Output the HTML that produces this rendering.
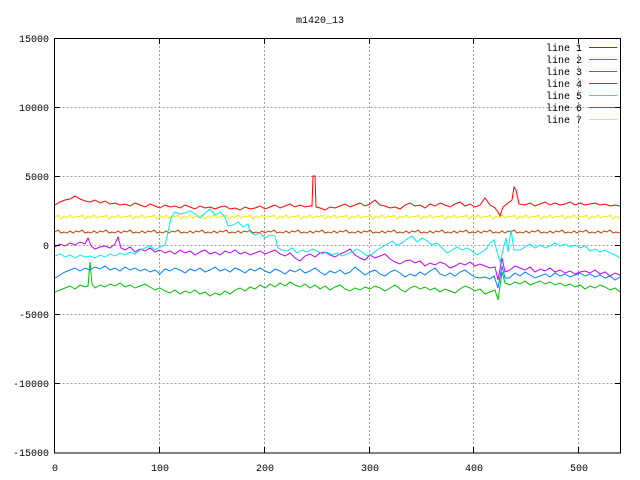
<!DOCTYPE html>
<html><head><meta charset="utf-8"><style>
html,body{margin:0;padding:0;background:#fff;width:640px;height:480px;overflow:hidden}
svg text{font-family:"Liberation Mono","DejaVu Sans Mono",monospace;font-size:10px;fill:#000}
</style></head><body>
<svg width="640" height="480" xmlns="http://www.w3.org/2000/svg">
<defs><clipPath id="c"><rect x="55" y="38" width="566" height="415"/></clipPath></defs>
<text x="320" y="23" text-anchor="middle">m1420_13</text>
<g stroke="#a0a0a0" stroke-dasharray="2,2" stroke-width="1" shape-rendering="crispEdges">
<line x1="54.5" y1="107.5" x2="621" y2="107.5"/>
<line x1="54.5" y1="176.5" x2="621" y2="176.5"/>
<line x1="54.5" y1="245.5" x2="621" y2="245.5"/>
<line x1="54.5" y1="314.5" x2="621" y2="314.5"/>
<line x1="54.5" y1="383.5" x2="621" y2="383.5"/>
<line x1="159.5" y1="38" x2="159.5" y2="453"/>
<line x1="264.5" y1="38" x2="264.5" y2="453"/>
<line x1="369.5" y1="38" x2="369.5" y2="453"/>
<line x1="473.5" y1="38" x2="473.5" y2="453"/>
<line x1="578.5" y1="38" x2="578.5" y2="453"/>
</g>
<g text-anchor="end">
<text x="49" y="42">15000</text><text x="49" y="111">10000</text><text x="49" y="180">5000</text>
<text x="49" y="249">0</text><text x="49" y="318">-5000</text><text x="49" y="387">-10000</text><text x="49" y="456">-15000</text>
</g>
<g text-anchor="middle">
<text x="55" y="471">0</text><text x="160" y="471">100</text><text x="265" y="471">200</text>
<text x="370" y="471">300</text><text x="474" y="471">400</text><text x="579" y="471">500</text>
</g>
<g fill="none" stroke-width="1" clip-path="url(#c)">
<path stroke="#eeee00" d="M55,217 l3,-2 l3,4 l3,-3 l3,2 l3,-3 l3,3 l3,-2 l3,1 l3,-2 l3,4 l3,-3 l3,2 l3,-3 l3,3 l3,-2 l3,1 l3,-2 l3,4 l3,-3 l3,2 l3,-3 l3,3 l3,-2 l3,1 l3,-2 l3,4 l3,-3 l3,2 l3,-3 l3,3 l3,-2 l3,1 l3,-2 l3,4 l3,-3 l3,2 l3,-3 l3,3 l3,-2 l3,1 l3,-2 l3,4 l3,-3 l3,2 l3,-3 l3,3 l3,-2 l3,1 l3,-2 l3,4 l3,-3 l3,2 l3,-3 l3,3 l3,-2 l3,1 l3,-2 l3,4 l3,-3 l3,2 l3,-3 l3,3 l3,-2 l3,1 l3,-2 l3,4 l3,-3 l3,2 l3,-3 l3,3 l3,-2 l3,1 l3,-2 l3,4 l3,-3 l3,2 l3,-3 l3,3 l3,-2 l3,1 l3,-2 l3,4 l3,-3 l3,2 l3,-3 l3,3 l3,-2 l3,1 l3,-2 l3,4 l3,-3 l3,2 l3,-3 l3,3 l3,-2 l3,1 l3,-2 l3,4 l3,-3 l3,2 l3,-3 l3,3 l3,-2 l3,1 l3,-2 l3,4 l3,-3 l3,2 l3,-3 l3,3 l3,-2 l3,1 l3,-2 l3,4 l3,-3 l3,2 l3,-3 l3,3 l3,-2 l3,1 l3,-2 l3,4 l3,-3 l3,2 l3,-3 l3,3 l3,-2 l3,1 l3,-2 l3,4 l3,-3 l3,2 l3,-3 l3,3 l3,-2 l3,1 l3,-2 l3,4 l3,-3 l3,2 l3,-3 l3,3 l3,-2 l3,1 l3,-2 l3,4 l3,-3 l3,2 l3,-3 l3,3 l3,-2 l3,1 l3,-2 l3,4 l3,-3 l3,2 l3,-3 l3,3 l3,-2 l3,1 l3,-2 l3,4 l3,-3 l3,2 l3,-3 l3,3 l3,-2 l3,1 l3,-2 l3,4 l3,-3 l3,2 l3,-3 l3,3 l3,-2 l3,1 l3,-2 l3,4 l3,-3 l3,2 l3,-3 l3,3 l3,-2 l3,1 l3,-2 l3,4 l3,-3 l3,2 l3,-3 l3,3 l3,-2 l3,1 l3,-2 l3,4 l3,-3 l3,2 l3,-3 l3,3 l3,-2 l3,1"/>
<path stroke="#c04000" d="M55,232 l3,-2 l3,3 l3,-1 l3,1 l3,-2 l3,2 l3,-2 l3,1 l3,-2 l3,3 l3,-1 l3,1 l3,-2 l3,2 l3,-2 l3,1 l3,-2 l3,3 l3,-1 l3,1 l3,-2 l3,2 l3,-2 l3,1 l3,-2 l3,3 l3,-1 l3,1 l3,-2 l3,2 l3,-2 l3,1 l3,-2 l3,3 l3,-1 l3,1 l3,-2 l3,2 l3,-2 l3,1 l3,-2 l3,3 l3,-1 l3,1 l3,-2 l3,2 l3,-2 l3,1 l3,-2 l3,3 l3,-1 l3,1 l3,-2 l3,2 l3,-2 l3,1 l3,-2 l3,3 l3,-1 l3,1 l3,-2 l3,2 l3,-2 l3,1 l3,-2 l3,3 l3,-1 l3,1 l3,-2 l3,2 l3,-2 l3,1 l3,-2 l3,3 l3,-1 l3,1 l3,-2 l3,2 l3,-2 l3,1 l3,-2 l3,3 l3,-1 l3,1 l3,-2 l3,2 l3,-2 l3,1 l3,-2 l3,3 l3,-1 l3,1 l3,-2 l3,2 l3,-2 l3,1 l3,-2 l3,3 l3,-1 l3,1 l3,-2 l3,2 l3,-2 l3,1 l3,-2 l3,3 l3,-1 l3,1 l3,-2 l3,2 l3,-2 l3,1 l3,-2 l3,3 l3,-1 l3,1 l3,-2 l3,2 l3,-2 l3,1 l3,-2 l3,3 l3,-1 l3,1 l3,-2 l3,2 l3,-2 l3,1 l3,-2 l3,3 l3,-1 l3,1 l3,-2 l3,2 l3,-2 l3,1 l3,-2 l3,3 l3,-1 l3,1 l3,-2 l3,2 l3,-2 l3,1 l3,-2 l3,3 l3,-1 l3,1 l3,-2 l3,2 l3,-2 l3,1 l3,-2 l3,3 l3,-1 l3,1 l3,-2 l3,2 l3,-2 l3,1 l3,-2 l3,3 l3,-1 l3,1 l3,-2 l3,2 l3,-2 l3,1 l3,-2 l3,3 l3,-1 l3,1 l3,-2 l3,2 l3,-2 l3,1 l3,-2 l3,3 l3,-1 l3,1 l3,-2 l3,2 l3,-2 l3,1 l3,-2 l3,3 l3,-1 l3,1 l3,-2 l3,2 l3,-2 l3,1 l3,-2 l3,3 l3,-1 l3,1 l3,-2 l3,2 l3,-2 l3,1 l3,-2 l3,3 l3,-1 l3,1 l3,-2 l3,2 l3,-2 l3,1 l3,-2 l3,3 l3,-1 l3,1 l3,-2 l3,2 l3,-2 l3,1"/>
<polyline stroke="#ff0000" points="55,205 60,202 65,200 70,199 75,196 80,199 85,201 90,202 95,200 100,203 105,201 110,204 115,203 120,205 125,204 130,206 135,203 140,205 145,207 150,204 155,206 160,208 165,205 170,207 175,206 180,208 185,205 190,207 195,209 200,206 205,208 210,207 215,209 220,207 225,206 230,209 235,208 240,210 245,207 250,209 255,208 260,206 265,209 270,207 275,205 280,208 285,206 290,204 295,207 300,205 305,207 310,206 312,206 313,176 315,176 316,207 320,208 325,210 330,207 335,208 340,206 345,204 350,207 355,205 360,203 365,206 370,204 375,200 380,205 385,206 390,208 395,207 400,209 405,205 410,203 415,206 420,205 425,208 430,204 435,206 440,203 445,205 450,207 455,204 460,202 465,206 470,204 475,207 480,205 485,198 490,205 495,208 498,212 500,216 503,207 508,203 512,200 514,187 516,190 519,204 525,205 530,203 535,206 540,204 545,202 550,205 555,203 560,205 565,204 570,202 575,205 580,203 585,205 590,204 595,203 600,205 605,204 610,206 615,205 620,206"/>
<polyline stroke="#00c000" points="55,292 60,290 65,288 70,286 75,289 80,285 85,287 88,286 90,262 92,284 95,288 100,285 105,287 110,284 115,286 120,283 125,287 130,285 135,288 140,286 145,284 150,287 155,290 160,288 165,291 170,293 175,290 180,294 185,291 190,293 195,290 200,294 205,292 210,296 215,293 220,295 225,291 230,294 235,290 240,288 245,291 250,287 255,289 260,285 265,288 270,284 275,287 280,283 285,286 290,282 295,285 300,287 305,284 310,288 315,285 320,289 325,286 330,290 335,287 340,285 345,289 350,291 355,288 360,290 365,287 370,289 375,286 380,288 385,291 390,288 395,285 400,289 405,292 410,288 415,286 420,289 425,287 430,290 435,288 440,292 445,289 450,291 455,293 460,289 465,286 470,288 475,291 480,289 485,294 490,292 495,290 498,300 502,272 505,283 510,285 515,282 520,284 525,281 530,285 535,283 540,281 545,284 550,282 555,285 560,283 565,286 570,284 575,287 580,285 585,289 590,286 595,288 600,285 605,287 610,290 615,288 620,292"/>
<polyline stroke="#0080ff" points="55,278 60,275 65,272 70,270 75,268 80,271 85,268 90,270 95,267 100,269 105,266 110,270 115,268 120,271 125,267 130,270 135,268 140,271 145,269 150,272 155,270 160,274 165,269 170,271 175,268 180,270 185,273 190,269 195,271 200,268 205,272 210,270 215,267 220,271 225,269 230,272 235,268 240,270 245,273 250,269 255,271 260,268 265,271 270,273 275,269 280,271 285,274 290,270 295,272 300,269 305,273 310,271 315,268 320,272 325,275 330,271 335,273 340,270 345,274 350,272 355,267 360,271 365,275 370,272 375,270 380,274 385,276 390,272 395,270 400,273 405,277 410,274 415,276 420,272 425,275 430,271 435,268 440,274 445,276 450,273 455,276 460,272 465,270 470,274 475,277 480,278 485,277 490,279 494,276 498,288 502,266 505,278 509,278 515,273 520,276 525,272 530,275 535,278 540,276 545,274 550,277 555,273 560,276 565,274 570,277 575,275 580,273 585,276 590,274 595,277 600,275 605,278 610,276 615,280 620,277"/>
<polyline stroke="#c000ff" points="55,247 60,244 65,246 70,243 75,245 80,242 85,244 88,238 91,246 95,249 100,247 105,246 110,248 115,244 118,237 121,248 125,250 130,247 135,252 140,249 145,251 150,248 155,252 160,250 165,253 170,251 175,254 180,250 185,253 190,251 195,255 200,252 205,250 210,254 215,252 220,255 225,251 230,253 235,250 240,254 245,252 250,255 255,253 260,251 265,254 270,252 275,250 280,254 285,256 290,253 295,258 300,261 305,256 310,254 315,257 320,253 325,252 330,255 335,257 340,254 345,252 350,249 355,255 360,258 365,260 370,255 375,258 380,256 385,254 390,259 395,262 400,264 405,261 410,260 415,263 420,261 425,266 430,263 435,265 440,262 445,264 450,268 455,266 460,263 465,265 470,262 475,266 480,264 485,266 490,268 495,267 498,280 502,258 505,272 510,270 515,266 520,268 525,270 530,267 535,272 540,269 545,271 550,268 555,272 560,270 565,273 570,271 575,274 580,272 585,271 590,273 595,270 600,274 605,272 610,276 615,273 620,275"/>
<polyline stroke="#00eeee" points="55,256 60,254 65,257 70,255 75,258 80,255 85,257 90,256 95,258 100,255 105,257 110,254 115,256 120,253 125,255 130,252 135,254 140,250 145,248 150,246 155,250 160,247 165,245 168,232 171,218 175,212 180,214 185,213 190,211 195,214 200,218 205,213 210,209 215,215 220,212 225,217 228,226 233,225 238,222 243,227 248,224 250,232 255,235 260,233 265,238 270,235 275,236 278,248 282,250 287,251 292,248 297,253 302,250 307,252 312,249 317,251 322,254 327,252 332,255 337,253 342,256 347,254 352,252 357,249 362,252 367,256 372,254 377,250 382,247 387,244 392,241 397,245 402,243 407,239 412,236 417,242 422,238 427,241 432,245 437,243 442,248 447,253 452,250 457,247 462,250 467,248 472,251 477,255 482,252 487,248 490,243 494,240 497,252 500,262 503,250 506,238 508,252 511,230 514,250 520,250 525,247 530,244 535,248 540,245 545,248 550,246 555,243 560,246 565,244 570,247 575,245 580,248 585,246 590,251 595,249 600,252 605,250 610,253 615,255 620,258"/>
</g>
<g text-anchor="end">
<text x="582" y="51">line 1</text><text x="582" y="63">line 2</text><text x="582" y="75">line 3</text>
<text x="582" y="87">line 4</text><text x="582" y="99">line 5</text><text x="582" y="111">line 6</text><text x="582" y="123">line 7</text>
</g>
<rect x="589" y="47" width="28" height="1" fill="#ff0000"/>
<rect x="589" y="59" width="28" height="1" fill="#00c000"/>
<rect x="589" y="71" width="28" height="1" fill="#0080ff"/>
<rect x="589" y="83" width="28" height="1" fill="#c000ff"/>
<rect x="589" y="95" width="28" height="1" fill="#00eeee"/>
<rect x="589" y="107" width="28" height="1" fill="#c04000"/>
<rect x="589" y="119" width="28" height="1" fill="#eeee00"/>
<g stroke="#000" stroke-width="1" shape-rendering="crispEdges">
<rect x="54.5" y="38.5" width="566" height="414.5" fill="none"/>
<line x1="54.5" y1="107.5" x2="60" y2="107.5"/><line x1="621" y1="107.5" x2="615" y2="107.5"/>
<line x1="54.5" y1="176.5" x2="60" y2="176.5"/><line x1="621" y1="176.5" x2="615" y2="176.5"/>
<line x1="54.5" y1="245.5" x2="60" y2="245.5"/><line x1="621" y1="245.5" x2="615" y2="245.5"/>
<line x1="54.5" y1="314.5" x2="60" y2="314.5"/><line x1="621" y1="314.5" x2="615" y2="314.5"/>
<line x1="54.5" y1="383.5" x2="60" y2="383.5"/><line x1="621" y1="383.5" x2="615" y2="383.5"/>
<line x1="159.5" y1="453" x2="159.5" y2="447"/><line x1="159.5" y1="38" x2="159.5" y2="44"/>
<line x1="264.5" y1="453" x2="264.5" y2="447"/><line x1="264.5" y1="38" x2="264.5" y2="44"/>
<line x1="369.5" y1="453" x2="369.5" y2="447"/><line x1="369.5" y1="38" x2="369.5" y2="44"/>
<line x1="473.5" y1="453" x2="473.5" y2="447"/><line x1="473.5" y1="38" x2="473.5" y2="44"/>
<line x1="578.5" y1="453" x2="578.5" y2="447"/><line x1="578.5" y1="38" x2="578.5" y2="44"/>
</g>
</svg>
</body></html>
